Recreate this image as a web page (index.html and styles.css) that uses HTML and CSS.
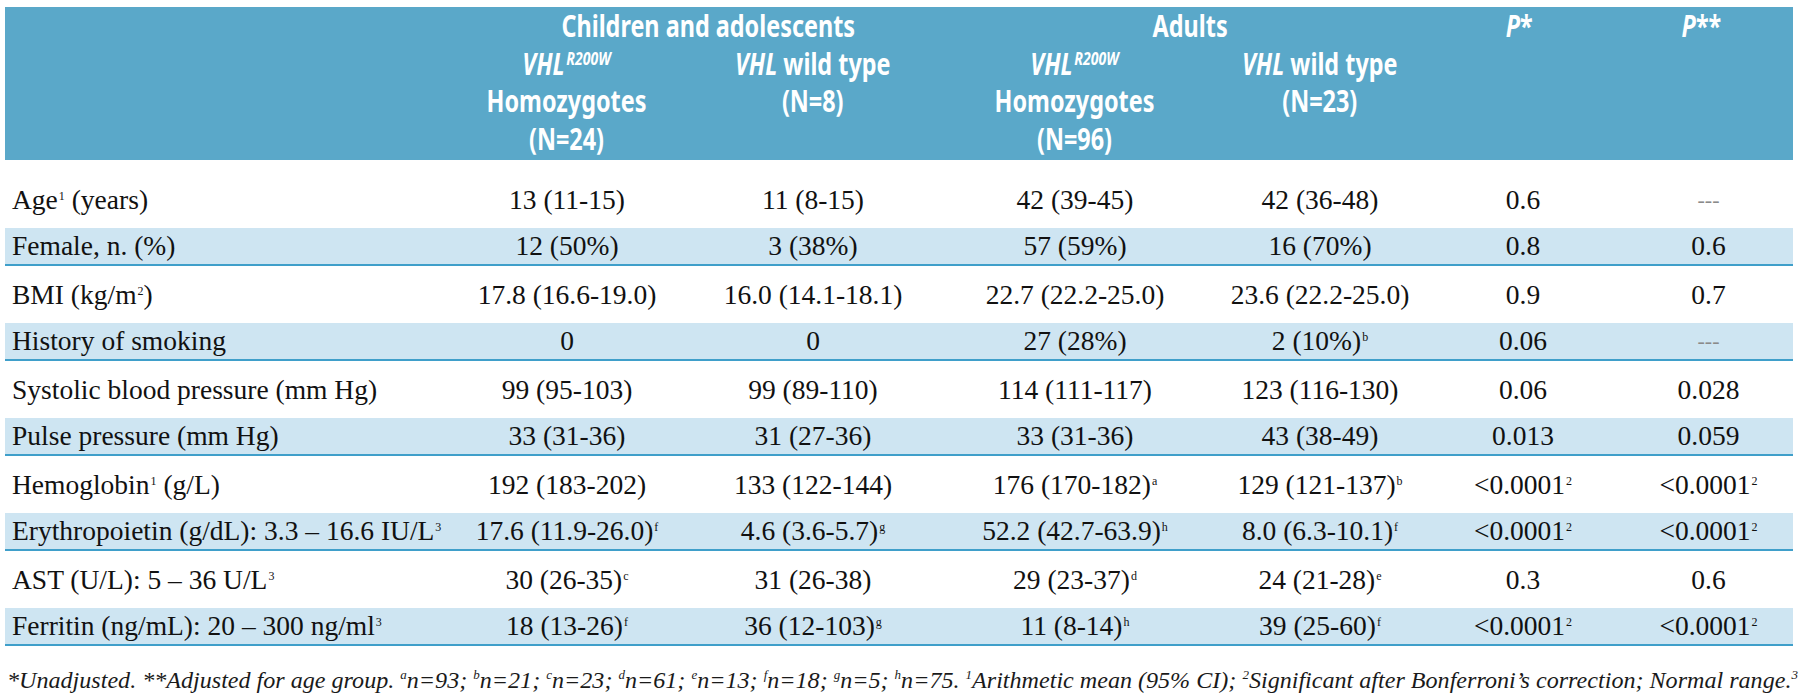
FILE: index.html
```html
<!DOCTYPE html>
<html>
<head>
<meta charset="utf-8">
<link rel="stylesheet" href="styles.css">
</head>
<body>
<div class="page">
  <div class="head">
    <div class="g g-kids"><span class="sq">Children and adolescents</span></div>
    <div class="g g-adults"><span class="sq">Adults</span></div>
    <div class="g g-p1"><span class="sq"><i>P</i>*</span></div>
    <div class="g g-p2"><span class="sq"><i>P</i>**</span></div>
    <div class="sub c2"><span class="sq"><i>VHL</i><sup class="hs"><i>R200W</i></sup><br>Homozygotes<br>(N=24)</span></div>
    <div class="sub c3"><span class="sq"><i>VHL</i> wild type<br>(N=8)</span></div>
    <div class="sub c4"><span class="sq"><i>VHL</i><sup class="hs"><i>R200W</i></sup><br>Homozygotes<br>(N=96)</span></div>
    <div class="sub c5"><span class="sq"><i>VHL</i> wild type<br>(N=23)</span></div>
  </div>

  <div class="rows">
    <div class="row first">
      <div class="lab">Age<sup class="s">1</sup> (years)</div>
      <div>13 (11-15)</div><div>11 (8-15)</div><div>42 (39-45)</div><div>42 (36-48)</div><div>0.6</div><div class="na">---</div>
    </div>
    <div class="row alt">
      <div class="lab">Female, n. (%)</div>
      <div>12 (50%)</div><div>3 (38%)</div><div>57 (59%)</div><div>16 (70%)</div><div>0.8</div><div>0.6</div>
    </div>
    <div class="row">
      <div class="lab">BMI (kg/m<sup class="s">2</sup>)</div>
      <div>17.8 (16.6-19.0)</div><div>16.0 (14.1-18.1)</div><div>22.7 (22.2-25.0)</div><div>23.6 (22.2-25.0)</div><div>0.9</div><div>0.7</div>
    </div>
    <div class="row alt">
      <div class="lab">History of smoking</div>
      <div>0</div><div>0</div><div>27 (28%)</div><div>2 (10%)<sup class="s">b</sup></div><div>0.06</div><div class="na">---</div>
    </div>
    <div class="row">
      <div class="lab">Systolic blood pressure (mm Hg)</div>
      <div>99 (95-103)</div><div>99 (89-110)</div><div>114 (111-117)</div><div>123 (116-130)</div><div>0.06</div><div>0.028</div>
    </div>
    <div class="row alt">
      <div class="lab">Pulse pressure (mm Hg)</div>
      <div>33 (31-36)</div><div>31 (27-36)</div><div>33 (31-36)</div><div>43 (38-49)</div><div>0.013</div><div>0.059</div>
    </div>
    <div class="row">
      <div class="lab">Hemoglobin<sup class="s">1</sup> (g/L)</div>
      <div>192 (183-202)</div><div>133 (122-144)</div><div>176 (170-182)<sup class="s">a</sup></div><div>129 (121-137)<sup class="s">b</sup></div><div>&lt;0.0001<sup class="s">2</sup></div><div>&lt;0.0001<sup class="s">2</sup></div>
    </div>
    <div class="row alt">
      <div class="lab">Erythropoietin (g/dL): 3.3 – 16.6 IU/L<sup class="s">3</sup></div>
      <div>17.6 (11.9-26.0)<sup class="s">f</sup></div><div>4.6 (3.6-5.7)<sup class="s">g</sup></div><div>52.2 (42.7-63.9)<sup class="s">h</sup></div><div>8.0 (6.3-10.1)<sup class="s">f</sup></div><div>&lt;0.0001<sup class="s">2</sup></div><div>&lt;0.0001<sup class="s">2</sup></div>
    </div>
    <div class="row">
      <div class="lab">AST (U/L): 5 – 36 U/L<sup class="s">3</sup></div>
      <div>30 (26-35)<sup class="s">c</sup></div><div>31 (26-38)</div><div>29 (23-37)<sup class="s">d</sup></div><div>24 (21-28)<sup class="s">e</sup></div><div>0.3</div><div>0.6</div>
    </div>
    <div class="row alt">
      <div class="lab">Ferritin (ng/mL): 20 – 300 ng/ml<sup class="s">3</sup></div>
      <div>18 (13-26)<sup class="s">f</sup></div><div>36 (12-103)<sup class="s">g</sup></div><div>11 (8-14)<sup class="s">h</sup></div><div>39 (25-60)<sup class="s">f</sup></div><div>&lt;0.0001<sup class="s">2</sup></div><div>&lt;0.0001<sup class="s">2</sup></div>
    </div>
  </div>

  <p class="foot">*Unadjusted. **Adjusted for age group. <sup class="fs">a</sup>n=93; <sup class="fs">b</sup>n=21; <sup class="fs">c</sup>n=23; <sup class="fs">d</sup>n=61; <sup class="fs">e</sup>n=13; <sup class="fs">f</sup>n=18; <sup class="fs">g</sup>n=5; <sup class="fs">h</sup>n=75. <sup class="fs">1</sup>Arithmetic mean (95% CI); <sup class="fs">2</sup>Significant after Bonferroni’s correction; Normal range.<sup class="fs">3</sup></p>
</div>
</body>
</html>
```

FILE: styles.css
```css
html, body {
  margin: 0;
  padding: 0;
  background: #ffffff;
}

.page {
  padding: 7px 7px 0 5px;
  width: 1788px;
}

.head {
  display: grid;
  grid-template-columns: 435px 254px 238px 286px 204px 202px 169px;
  background: #5aa8c9;
  color: #ffffff;
  font-family: "Noto Sans", "Liberation Sans", sans-serif;
  font-weight: bold;
  font-size: 30px;
  line-height: 37.5px;
  text-align: center;
  padding-bottom: 3px;
  white-space: nowrap;
}

.sq {
  display: inline-block;
  transform: scaleX(0.78);
  transform-origin: 50% 50%;
}

.g { grid-row: 1; }
.g-kids { grid-column: 2 / 4; padding-left: 44px; }
.g-adults { grid-column: 4 / 6; padding-left: 26px; }
.g-p1 { grid-column: 6; padding-right: 8px; }
.g-p2 { grid-column: 7; padding-right: 14px; }

.sub { grid-row: 2; }
.c2 { grid-column: 2; }
.c3 { grid-column: 3; }
.c4 { grid-column: 4; }
.c5 { grid-column: 5; }

.hs {
  font-size: 18px;
  line-height: 0;
  vertical-align: 10px;
  margin-left: 2px;
}

.rows {
  font-family: "Liberation Serif", "Times New Roman", serif;
  font-size: 27.5px;
  color: #111111;
}

.row {
  display: grid;
  grid-template-columns: 435px 254px 238px 286px 204px 202px 169px;
  height: 38px;
  box-sizing: border-box;
  align-items: center;
  text-align: center;
  margin-top: 9.5px;
  white-space: nowrap;
}

.row.first { margin-top: 20.5px; }

.row.alt {
  background: #cee5f2;
  border-bottom: 2px solid #3f9fca;
}

.lab {
  text-align: left;
  padding-left: 7px;
}

.s {
  font-size: 12px;
  line-height: 0;
  vertical-align: 9px;
  margin-left: 1px;
}

.na { color: #8a8a8a; font-size: 22px; }

.foot {
  margin: 19px 0 0 2px;
  font-family: "Liberation Serif", "Times New Roman", serif;
  font-style: italic;
  font-size: 24.1px;
  line-height: 30px;
  color: #1a1a1a;
  white-space: nowrap;
}

.fs {
  font-size: 13px;
  line-height: 0;
  vertical-align: 9px;
}
```
